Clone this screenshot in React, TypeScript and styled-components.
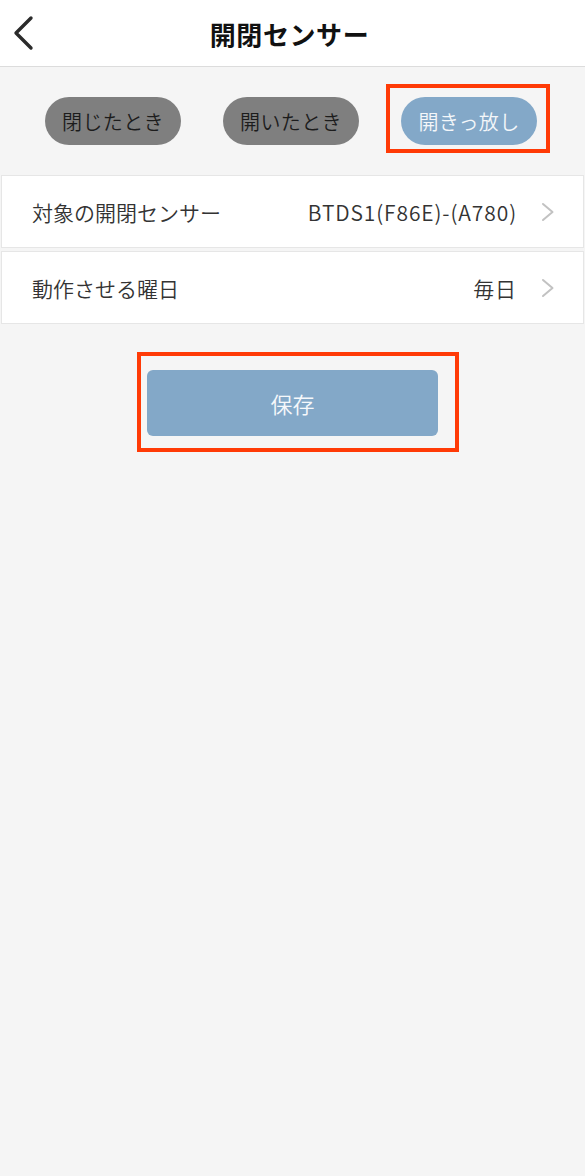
import React from "react";
import styled, { createGlobalStyle } from "styled-components";

const Global = createGlobalStyle`
  html, body { margin: 0; padding: 0; }
  body {
    background: #f5f5f5;
    font-family: "Noto Sans CJK JP", "Noto Sans", sans-serif;
  }
`;

const Page = styled.div`
  min-height: 1176px;
  background: #f5f5f5;
  display: flex;
  flex-direction: column;
`;

const Header = styled.header`
  height: 66px;
  background: #ffffff;
  border-bottom: 1px solid #dcdcdc;
  position: relative;
  display: flex;
  align-items: center;
  justify-content: center;
`;

const BackButton = styled.button`
  position: absolute;
  left: 8px;
  top: 13px;
  width: 32px;
  height: 40px;
  padding: 0;
  border: none;
  background: transparent;
  display: flex;
  align-items: center;
  justify-content: center;
`;

const Title = styled.h1`
  margin: 0 6px 0 0;
  font-size: 26px;
  font-weight: 700;
  color: #111;
  letter-spacing: 0.6px;
`;

const PillRow = styled.div`
  display: flex;
  justify-content: flex-start;
  gap: 42px;
  padding: 30px 0 30px 45px;
`;

const Pill = styled.button<{ $active?: boolean }>`
  position: relative;
  width: 136px;
  height: 48px;
  border: none;
  border-radius: 24px;
  padding: 0;
  font-family: inherit;
  font-size: 20px;
  font-weight: 350;
  letter-spacing: 0.4px;
  background: ${(p) => (p.$active ? "#83a8c8" : "#7f7f7f")};
  color: ${(p) => (p.$active ? "#f4f7fa" : "#1c1c1c")};
  display: flex;
  align-items: center;
  justify-content: center;
`;

const Highlight = styled.span<{ $t: number; $l: number; $r: number; $b: number }>`
  position: absolute;
  top: ${(p) => -p.$t}px;
  left: ${(p) => -p.$l}px;
  right: ${(p) => -p.$r}px;
  bottom: ${(p) => -p.$b}px;
  border: 4px solid #ff3a06;
  pointer-events: none;
`;

const List = styled.div`
  display: flex;
  flex-direction: column;
  gap: 3px;
  margin: 0 1px;
`;

const Row = styled.div`
  height: 73px;
  box-sizing: border-box;
  background: #ffffff;
  border: 1px solid #e6e6e6;
  display: flex;
  align-items: center;
  padding: 0 28px 0 30px;
`;

const Label = styled.span`
  font-size: 21px;
  font-weight: 350;
  color: #333;
  flex: 1;
`;

const Value = styled.span`
  font-size: 21px;
  font-weight: 350;
  letter-spacing: 0.9px;
  color: #333;
  margin-right: 24px;
`;

const SaveWrap = styled.div`
  display: flex;
  justify-content: center;
  margin-top: 46px;
`;

const SaveButton = styled.button`
  position: relative;
  width: 291px;
  height: 66px;
  border: none;
  border-radius: 6px;
  background: #83a8c8;
  color: #f6f8fb;
  font-family: inherit;
  font-size: 22px;
  font-weight: 350;
  display: flex;
  align-items: center;
  justify-content: center;
`;

const Chevron = () => (
  <svg width="14" height="20" viewBox="0 0 14 20">
    <path d="M2 2 L11.5 10 L2 18" fill="none" stroke="#c2c2c2" strokeWidth="2" strokeLinecap="round" strokeLinejoin="round" />
  </svg>
);

const BackIcon = () => (
  <svg width="24" height="36" viewBox="0 0 24 36">
    <path d="M19 3 L4 18 L19 33" fill="none" stroke="#2b2b2b" strokeWidth="3.4" strokeLinecap="round" strokeLinejoin="round" />
  </svg>
);

export default function App() {
  return (
    <Page>
      <Global />
      <Header>
        <BackButton aria-label="back">
          <BackIcon />
        </BackButton>
        <Title>開閉センサー</Title>
      </Header>
      <PillRow>
        <Pill>閉じたとき</Pill>
        <Pill>開いたとき</Pill>
        <Pill $active>
          開きっ放し
          <Highlight $t={13} $l={15} $r={13} $b={8} />
        </Pill>
      </PillRow>
      <List>
        <Row>
          <Label>対象の開閉センサー</Label>
          <Value>BTDS1(F86E)-(A780)</Value>
          <Chevron />
        </Row>
        <Row>
          <Label>動作させる曜日</Label>
          <Value>毎日</Value>
          <Chevron />
        </Row>
      </List>
      <SaveWrap>
        <SaveButton>
          保存
          <Highlight $t={18} $l={10} $r={21} $b={16} />
        </SaveButton>
      </SaveWrap>
    </Page>
  );
}
